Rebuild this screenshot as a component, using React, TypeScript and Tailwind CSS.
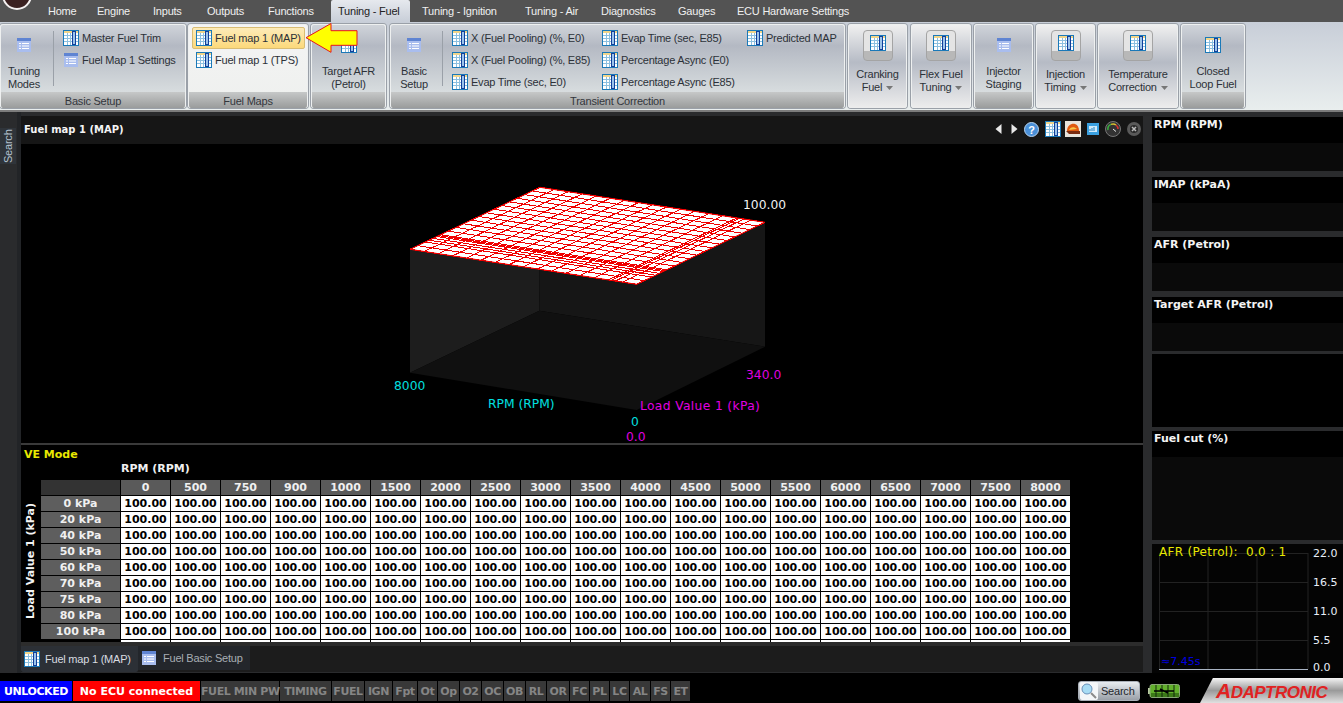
import type { ReactNode } from 'react';

const TAHOMA = "font-['Liberation_Sans',Arial,sans-serif] tracking-[-0.22px]";
const VERDANA = "font-['DejaVu_Sans',Verdana,sans-serif]";

const TABS = [
  { label: 'Home', w: 'w-[49px]' },
  { label: 'Engine', w: 'w-[56px]' },
  { label: 'Inputs', w: 'w-[54px]' },
  { label: 'Outputs', w: 'w-[61px]' },
  { label: 'Functions', w: 'w-[70px]' },
  { label: 'Tuning - Fuel', w: 'w-[79px]', active: true },
  { label: 'Tuning - Ignition', w: 'w-[103px] ml-[5px]' },
  { label: 'Tuning - Air', w: 'w-[76px]' },
  { label: 'Diagnostics', w: 'w-[77px]' },
  { label: 'Gauges', w: 'w-[59px]' },
  { label: 'ECU Hardware Settings', w: 'w-[130px]' },
];

const RPMS = [0, 500, 750, 900, 1000, 1500, 2000, 2500, 3000, 3500, 4000, 4500, 5000, 5500, 6000, 6500, 7000, 7500, 8000];
const LOADS = [0, 20, 40, 50, 60, 70, 75, 80, 100];
const LOAD_AXIS = [0, 20, 40, 50, 60, 70, 75, 80, 100, 120, 140, 160, 180, 200, 220, 240, 260, 280, 300, 320, 340];

const CHIPS = [
  { label: 'FUEL MIN PW', w: 'w-[78px]' },
  { label: 'TIMING', w: 'w-[51px]' },
  { label: 'FUEL', w: 'w-[32px]' },
  { label: 'IGN', w: 'w-[27px]' },
  { label: 'Fpt', w: 'w-[24px]' },
  { label: 'Ot', w: 'w-[19px]' },
  { label: 'Op', w: 'w-[21px]' },
  { label: 'O2', w: 'w-[21px]' },
  { label: 'OC', w: 'w-[21px]' },
  { label: 'OB', w: 'w-[21px]' },
  { label: 'RL', w: 'w-[20px]' },
  { label: 'OR', w: 'w-[22px]' },
  { label: 'FC', w: 'w-[19px]' },
  { label: 'PL', w: 'w-[19px]' },
  { label: 'LC', w: 'w-[19px]' },
  { label: 'AL', w: 'w-[20px]' },
  { label: 'FS', w: 'w-[19px]' },
  { label: 'ET', w: 'w-[19px]' },
];

function TableIcon() {
  return (
    <svg width="16" height="16" viewBox="0 0 16 16" className="shrink-0">
      <rect x="0.5" y="0.5" width="15" height="15" fill="#fff" stroke="#1b79b8" />
      <rect x="1" y="1" width="14" height="2" fill="#f0d58a" />
      <path d="M1 5.5h14M1 8.5h14M1 11.5h14M4.5 3v12M7.5 3v12" stroke="#8cc0e0" />
      <rect x="9.5" y="1.5" width="3" height="13" fill="#9cc4ea" stroke="#123f9a" />
    </svg>
  );
}

function ListIcon() {
  return (
    <svg width="14" height="14" viewBox="0 0 14 14" className="shrink-0">
      <rect width="14" height="14" fill="#a9bdee" />
      <rect width="14" height="3" fill="#5f84d2" />
      <path d="M2 5.5h2M5 5.5h7M2 8h2M5 8h7M2 10.5h2M5 10.5h7" stroke="#fff" />
    </svg>
  );
}

function Caret() {
  return (
    <svg width="7" height="4" viewBox="0 0 7 4" className="inline-block ml-[4px] align-middle">
      <path d="M0 0h7L3.5 4z" fill="#777" />
    </svg>
  );
}

function Group({ className, label, light, footer = true, children }: { className: string; label?: string; light?: boolean; footer?: boolean; children: ReactNode }) {
  return (
    <div className={`flex h-[84px] flex-col overflow-hidden rounded-[3px] border-x border-t border-[#eef0f0] shadow-[0_0_0_1px_#9aa0a8] ${className} ${
      light ? 'bg-linear-to-b from-[#f4f4f4] to-[#eef0ee]' : footer ? 'bg-linear-to-b from-[#d0d4da] via-[#b4b9c3] via-25% to-[#e4e9e8]' : 'bg-linear-to-b from-[#f0f0f0] via-[#b6bbc5] via-45% to-[#ededed]'
    }`}>
      <div className={`flex shrink-0 ${footer ? 'h-[67px]' : 'h-full'}`}>{children}</div>
      {footer && (
        <div className="flex flex-1 items-center justify-center bg-linear-to-b from-[#c6c8c8] to-[#9a9c9c] pt-[2px] text-[11px] leading-none text-[#33363c]">
          {label}
        </div>
      )}
    </div>
  );
}

function Item({ icon = 'table', label, selected }: { icon?: 'table' | 'list'; label: string; selected?: boolean }) {
  return (
    <div className={`flex h-[22px] items-center whitespace-nowrap text-[11px] text-[#2c3138] ${
      selected ? 'w-[113px] gap-[3px] rounded-[2px] border border-[#d9bd74] bg-linear-to-b from-[#fdebb8] to-[#fcd97a] pl-[3px]' : 'gap-[3px] pl-[4px]'
    }`}>
      <span className="flex w-[16px] justify-center">{icon === 'table' ? <TableIcon /> : <ListIcon />}</span>
      <span>{label}</span>
    </div>
  );
}

function BigLabel({ icon = 'list', lines, className }: { icon?: 'table' | 'list'; lines: string[]; className: string }) {
  return (
    <div className={`flex flex-col items-center pt-[12px] text-center text-[11px] leading-[13px] text-[#2c3138] ${className}`}>
      <div className="flex h-[16px] items-center">{icon === 'table' ? <TableIcon /> : <ListIcon />}</div>
      <div className="mt-[12px]">{lines.map((l) => <div key={l}>{l}</div>)}</div>
    </div>
  );
}

function DropGroup({ className, lines }: { className: string; lines: string[] }) {
  return (
    <Group className={className} footer={false}>
      <div className="flex w-full flex-col items-center pt-[5px] text-center text-[11px] leading-[13px] text-[#2c3138]">
        <div className="flex h-[31px] w-[30px] shrink-0 items-center justify-center rounded-[4px] border border-[#a4a4a4] bg-[linear-gradient(#e4e4e4_0,#e4e4e4_68%,#b8b8b8_68%,#b8b8b8_100%)] pb-[5px]">
          <TableIcon />
        </div>
        <div className="mt-[7px] whitespace-nowrap">
          <div>{lines[0]}</div>
          <div>{lines[1]}<Caret /></div>
        </div>
      </div>
    </Group>
  );
}

function Separator({ className }: { className: string }) {
  return <div className={`mt-[6px] h-[55px] w-px bg-[#9aa0a8] ${className}`} />;
}

function Ribbon() {
  return (
    <div className={`relative flex h-[90px] shrink-0 border-b-2 border-[#7c7c7c] bg-linear-to-b from-[#c8ced8] to-[#e9eeee] pt-[2px] ${TAHOMA}`}>
      <Group className="w-[186px]" label="Basic Setup">
        <BigLabel lines={['Tuning', 'Modes']} className="w-[46px]" />
        <Separator className="ml-[6px]" />
        <div className="ml-[5px] pt-[2px]">
          <Item label="Master Fuel Trim" />
          <Item icon="list" label="Fuel Map 1 Settings" />
        </div>
      </Group>
      <Group className="ml-[2px] w-[120px]" label="Fuel Maps" light>
        <div className="pl-[3px] pt-[2px]">
          <Item label="Fuel map 1 (MAP)" selected />
          <Item label="Fuel map 1 (TPS)" />
        </div>
      </Group>
      <Group className="ml-[3px] w-[75px]">
        <BigLabel icon="table" lines={['Target AFR', '(Petrol)']} className="w-full" />
      </Group>
      <Group className="ml-[4px] w-[455px]" label="Transient Correction">
        <BigLabel lines={['Basic', 'Setup']} className="w-[46px]" />
        <Separator className="ml-[5px]" />
        <div className="ml-[5px] w-[150px] pt-[2px]">
          <Item label="X (Fuel Pooling) (%, E0)" />
          <Item label="X (Fuel Pooling) (%, E85)" />
          <Item label="Evap Time (sec, E0)" />
        </div>
        <div className="w-[145px] pt-[2px]">
          <Item label="Evap Time (sec, E85)" />
          <Item label="Percentage Async (E0)" />
          <Item label="Percentage Async (E85)" />
        </div>
        <div className="pt-[2px]">
          <Item label="Predicted MAP" />
        </div>
      </Group>
      <DropGroup className="ml-[3px] w-[59px]" lines={['Cranking', 'Fuel']} />
      <DropGroup className="ml-[4px] w-[60px]" lines={['Flex Fuel', 'Tuning']} />
      <Group className="ml-[3px] w-[59px]">
        <BigLabel lines={['Injector', 'Staging']} className="w-full" />
      </Group>
      <DropGroup className="ml-[3px] w-[59px]" lines={['Injection', 'Timing']} />
      <DropGroup className="ml-[3px] w-[80px]" lines={['Temperature', 'Correction']} />
      <Group className="ml-[3px] w-[64px]">
        <BigLabel icon="table" lines={['Closed', 'Loop Fuel']} className="w-full" />
      </Group>
      {/* callout arrow pasted over the ribbon */}
      <svg width="54" height="32" viewBox="305 22 54 32" className="absolute left-[305px] top-0">
        <path d="M306 37.7L331 23.5V30.7H357V45.3H331V52.3Z" fill="#ffff00" stroke="#e8141c" />
      </svg>
    </div>
  );
}

function lerp(a: number[], b: number[], t: number) {
  return [a[0] + (b[0] - a[0]) * t, a[1] + (b[1] - a[1]) * t];
}

function Surface() {
  const front = [636.7, 284.3];
  const left = [410, 249.3];
  const right = [765, 222.3];
  const back = [540, 187.3];
  const pt = (u: number, v: number) => lerp(lerp(front, left, u), lerp(right, back, u), v);
  const lines: string[] = [];
  RPMS.forEach((r) => {
    const a = pt(r / 8000, 0);
    const b = pt(r / 8000, 1);
    lines.push(`M${a[0]} ${a[1]}L${b[0]} ${b[1]}`);
  });
  LOAD_AXIS.forEach((l) => {
    const a = pt(0, l / 340);
    const b = pt(1, l / 340);
    lines.push(`M${a[0]} ${a[1]}L${b[0]} ${b[1]}`);
  });
  const font = { fontFamily: 'DejaVu Sans', fontSize: 12.3 };
  return (
    <svg width="1122" height="299" viewBox="21 144 1122 299" className="block">
      <polygon points="410,249.3 540,187.3 539.3,310.7 410,372.7" fill="#1d1d1d" />
      <polygon points="540,187.3 765,222.3 765,346.7 539.3,310.7" fill="#161616" />
      <polygon points="410,372.7 539.3,310.7 765,346.7 636.7,410" fill="#101010" />
      <polygon points="410,249.3 540,187.3 765,222.3 636.7,284.3" fill="#fff" />
      <path d={lines.join('')} stroke="#f00000" strokeWidth="1" fill="none" shapeRendering="crispEdges" />
      <polygon points="410,249.3 540,187.3 765,222.3 636.7,284.3" fill="none" stroke="#f00000" />
      <g {...font}>
        <text x="743" y="209" fill="#f4f4f4">100.00</text>
        <text x="394" y="390" fill="#00e0e0">8000</text>
        <text x="488" y="408" fill="#00e0e0">RPM (RPM)</text>
        <text x="640" y="410" fill="#e000e0" letterSpacing="0.35">Load Value 1 (kPa)</text>
        <text x="746" y="379" fill="#e000e0">340.0</text>
        <text x="631" y="426" fill="#00e0e0">0</text>
        <text x="626" y="441" fill="#e000e0">0.0</text>
      </g>
    </svg>
  );
}

function HeaderIcons() {
  return (
    <div className="ml-auto mr-[2px] flex items-center">
      <svg width="7" height="10" viewBox="0 0 7 10"><path d="M6.5 0v10L0.5 5z" fill="#e8e8e8" /></svg>
      <svg width="7" height="10" viewBox="0 0 7 10" className="ml-[9px]"><path d="M0.5 0v10l6-5z" fill="#e8e8e8" /></svg>
      <svg width="15" height="15" viewBox="0 0 15 15" className="ml-[6px]">
        <circle cx="7.5" cy="7.5" r="7" fill="#4a90d8" stroke="#b8d4f0" />
        <text x="7.5" y="11.5" textAnchor="middle" fontSize="11" fontWeight="700" fontFamily="Liberation Sans" fill="#fff">?</text>
      </svg>
      <span className="ml-[6px] flex"><TableIcon /></span>
      <svg width="16" height="16" viewBox="0 0 16 16" className="ml-[4px]">
        <rect width="16" height="16" fill="#e8e4dc" />
        <path d="M2 10C2 4 7 2 10 3s4 4 4 7z" fill="#e05a10" />
        <path d="M4 9c1-3 5-4 8-1z" fill="#f8c848" />
        <path d="M1 10h14v3H4z" fill="#7a2c10" />
      </svg>
      <svg width="12" height="12" viewBox="0 0 12 12" className="ml-[6px]">
        <rect width="12" height="12" fill="#3aa0e0" />
        <rect x="2" y="3" width="8" height="6" fill="#cfeafa" />
        <path d="M3 8V6M5 8V5M7 8V4" stroke="#2080c0" />
      </svg>
      <svg width="16" height="16" viewBox="0 0 16 16" className="ml-[6px]">
        <circle cx="8" cy="8" r="7.5" fill="#333" stroke="#777" />
        <path d="M3 9A5 5 0 0 1 6 3.4" stroke="#3ab040" strokeWidth="1.5" fill="none" />
        <path d="M6 3.4A5 5 0 0 1 11 4" stroke="#d8c030" strokeWidth="1.5" fill="none" />
        <path d="M11 4A5 5 0 0 1 13 8" stroke="#d83030" strokeWidth="1.5" fill="none" />
        <path d="M8 8l3 2.5" stroke="#eee" />
      </svg>
      <svg width="14" height="14" viewBox="0 0 14 14" className="ml-[6px]">
        <circle cx="7" cy="7" r="7" fill="#5a5a5a" />
        <circle cx="7" cy="7" r="4" fill="#2a2a2a" />
        <path d="M5 5l4 4M9 5l-4 4" stroke="#bbb" strokeWidth="1.5" />
      </svg>
    </div>
  );
}

function MapTable() {
  return (
    <div className={`grid grid-cols-[79px_repeat(19,49px)] gap-px text-center text-[11px] font-bold leading-[15px] ${VERDANA}`}>
      <div className="h-[15px] bg-[#333]" />
      {RPMS.map((c) => (
        <div key={c} className="h-[15px] bg-[#5a5a5a] text-[#f0f0f0]">{c}</div>
      ))}
      {LOADS.map((l) => (
        <Row key={l} load={l} />
      ))}
      {/* next row just peeks out under the scroll edge */}
      <div className="h-[2px]" />
      {RPMS.map((c) => (
        <div key={c} className="h-[2px] bg-white" />
      ))}
    </div>
  );
}

function Row({ load }: { load: number }) {
  return (
    <>
      <div className="h-[15px] bg-[#5e5e5e] text-[#f0f0f0]">{load} kPa</div>
      {RPMS.map((c) => (
        <div key={c} className="h-[15px] bg-white text-black">100.00</div>
      ))}
    </>
  );
}

function GaugePanel({ title, className, blank }: { title?: string; className: string; blank?: boolean }) {
  return (
    <div className={`flex flex-col bg-black ${className}`}>
      {title && <div className={`px-[2px] pt-[1px] text-[11px] font-bold leading-[14px] text-[#f4f4f4] ${VERDANA}`}>{title}</div>}
      <div className="h-[11px] shrink-0" />
      {!blank && <div className="flex-1 bg-[#0a0a0a]" />}
    </div>
  );
}

function AfrChart() {
  const labels = [
    { v: '22.0', top: 'top-[3px]' },
    { v: '16.5', top: 'top-[32px]' },
    { v: '11.0', top: 'top-[61px]' },
    { v: '5.5', top: 'top-[90px]' },
  ];
  return (
    <div className={`relative mt-[4px] h-[129px] overflow-hidden bg-[#040404] ${VERDANA}`}>
      <svg width="191" height="129" className="absolute left-0 top-0">
        <path d="M7.5 9V125M56 9V125M105 9V125M156 9V125M7 9.5H156M7 38.5H156M7 67.5H156M7 96.5H156" stroke="#222" fill="none" />
        <path d="M7 125.5H156" stroke="#a9b4c4" />
      </svg>
      <div className="absolute left-[7px] top-0 whitespace-pre text-[12px] leading-[16px] tracking-[0.3px] text-[#e8e800]">AFR (Petrol):  0.0 : 1</div>
      <div className="absolute left-[9px] top-[111px] text-[11px] leading-[14px] text-[#0000e0]">≈7.45s</div>
      {labels.map((l) => (
        <div key={l.v} className={`absolute left-[161px] text-[11px] leading-[14px] text-[#e8eef8] ${l.top}`}>{l.v}</div>
      ))}
      <div className="absolute left-[161px] top-[118px] text-[11px] leading-[11px] text-[#e8eef8]">0.0</div>
    </div>
  );
}

export default function App() {
  return (
    <div className="flex h-[703px] w-[1343px] flex-col overflow-hidden bg-[#2a2b2d]">
      {/* tab strip */}
      <div className={`flex h-[22px] shrink-0 bg-[#535353] text-[11px] leading-[22px] text-[#f0f0f0] ${TAHOMA}`}>
        <div className="relative w-[41px] overflow-hidden">
          <svg width="34" height="12" viewBox="0 0 34 12" className="absolute left-0 top-0">
            <circle cx="17" cy="-5" r="14" fill="#3a2020" stroke="#f4f0f0" strokeWidth="2" />
          </svg>
        </div>
        {TABS.map((t) => (
          <div key={t.label} className={`shrink-0 whitespace-nowrap pl-[7px] ${t.w} ${t.active ? 'rounded-t-[2px] bg-linear-to-b from-[#e6e9ee] to-[#c8ced8] text-[#222]' : ''}`}>
            {t.label}
          </div>
        ))}
      </div>

      <Ribbon />

      <div className="flex h-[561px] shrink-0">
        {/* side strip */}
        <div className="w-[21px] shrink-0 border-r-[4px] border-[#222427] pt-[16px]">
          <div className={`flex h-[36px] w-[16px] rotate-180 items-center justify-center bg-[#2f343a] text-[11px] text-[#b4c2d0] [writing-mode:vertical-rl] ${TAHOMA}`}>
            Search
          </div>
        </div>

        {/* main document */}
        <div className="flex w-[1122px] shrink-0 flex-col pt-[4px]">
          <div className={`flex h-[28px] items-center bg-[#161616] pb-[2px] pl-[3px] text-[10px] font-bold text-[#f4f4f4] ${VERDANA}`}>
            Fuel map 1 (MAP)
            <HeaderIcons />
          </div>
          <div className="h-[299px] bg-black"><Surface /></div>
          <div className="h-[2px] bg-[#3a3a3a]" />
          <div className={`h-[197px] overflow-hidden bg-black ${VERDANA}`}>
            <div className="pl-[3px] pt-[3px] text-[11px] font-bold leading-[14px] text-[#e8e800]">VE Mode</div>
            <div className="pl-[100px] text-[11px] font-bold leading-[14px] text-[#f0f0f0]">RPM (RPM)</div>
            <div className="mt-[4px] flex">
              <div className="flex h-[162px] w-[20px] items-center justify-center">
                <span className="rotate-180 whitespace-nowrap text-[11px] font-bold text-[#f4f4f4] [writing-mode:vertical-rl]">Load Value 1 (kPa)</span>
              </div>
              <MapTable />
            </div>
          </div>
          <div className="h-[4px] bg-[#2c2c2c]" />
          <div className={`flex h-[26px] bg-[#1c1c1c] text-[11px] ${TAHOMA}`}>
            <div className="flex w-[117px] items-center gap-[5px] rounded-b-[2px] bg-[#2c3036] pl-[3px] text-[#d8dce0]">
              <TableIcon />Fuel map 1 (MAP)
            </div>
            <div className="flex h-[24px] w-[112px] items-center gap-[7px] bg-[#23262b] pl-[4px] text-[#a8aeb4]">
              <ListIcon />Fuel Basic Setup
            </div>
          </div>
        </div>

        {/* gauges */}
        <div className="ml-[9px] flex w-[191px] shrink-0 flex-col pt-[5px]">
          <GaugePanel title="RPM (RPM)" className="h-[54px]" />
          <GaugePanel title="IMAP  (kPaA)" className="mt-[6px] h-[54px]" />
          <GaugePanel title="AFR (Petrol)" className="mt-[6px] h-[54px]" />
          <GaugePanel title="Target AFR (Petrol)" className="mt-[6px] h-[54px]" />
          <GaugePanel className="mt-[3px] h-[73px]" blank />
          <GaugePanel title="Fuel cut (%)" className="mt-[4px] h-[109px]" />
          <AfrChart />
        </div>
      </div>

      {/* status bar */}
      <div className={`flex h-[30px] shrink-0 items-start bg-black pt-[8px] text-[11px] font-bold leading-[21px] tracking-[-0.4px] ${VERDANA}`}>
        <div className="h-[20px] w-[72px] bg-[#0000ff] text-center text-white">UNLOCKED</div>
        <div className="ml-px h-[20px] w-[127px] bg-[#ff0000] text-center tracking-normal text-white">No ECU connected</div>
        <div className="ml-px flex gap-px">
          {CHIPS.map((c) => (
            <div key={c.label} className={`h-[20px] whitespace-nowrap bg-[#383838] text-center text-[#858585] ${c.w}`}>{c.label}</div>
          ))}
        </div>
        <div className={`ml-auto flex items-start ${TAHOMA}`}>
          <div className="flex h-[20px] w-[62px] items-center gap-[3px] rounded-[3px] border border-[#aab0b8] bg-linear-to-b from-[#e8ecf0] to-[#9aa0a8] pl-[1px] text-[11px] font-normal text-[#23262b]">
            <svg width="18" height="18" viewBox="0 0 18 18">
              <rect width="18" height="18" rx="2" fill="#f4f6f8" />
              <circle cx="7" cy="7" r="5" fill="#a8dcf4" stroke="#6a90b8" />
              <path d="M11 11l5 5" stroke="#8a8a8a" strokeWidth="2" />
            </svg>
            Search
          </div>
          <svg width="32" height="14" viewBox="0 0 32 14" className="ml-[8px] mt-[3px]">
            <rect x="0" y="4" width="2" height="6" fill="#b8c8a0" />
            <rect x="2" y="0.5" width="29.5" height="13" rx="2" fill="#62b02c" stroke="#8aa878" />
            <rect x="3" y="9" width="28" height="4" fill="#3c7a18" />
            <path d="M8 1v12M14 1v12M20 1v12M26 1v12" stroke="#10280a" />
            <path d="M6 7h20M12 5l8 4" stroke="#000" strokeWidth="1.5" />
          </svg>
          {/* logo plate */}
          <div className="-mt-[3px] ml-[20px] flex h-[25px] w-[143px] items-center bg-linear-to-b from-[#f4f4f4] via-[#9a9a9a] to-[#e0e0e0] pl-[16px] [clip-path:polygon(9%_0,100%_0,100%_100%,0_100%)]">
            <span className="whitespace-nowrap text-[21px] font-bold italic leading-none tracking-[-0.5px] text-[#e02222]">A<span className="text-[17px]">DAPTRONIC</span></span>
          </div>
        </div>
      </div>
    </div>
  );
}
